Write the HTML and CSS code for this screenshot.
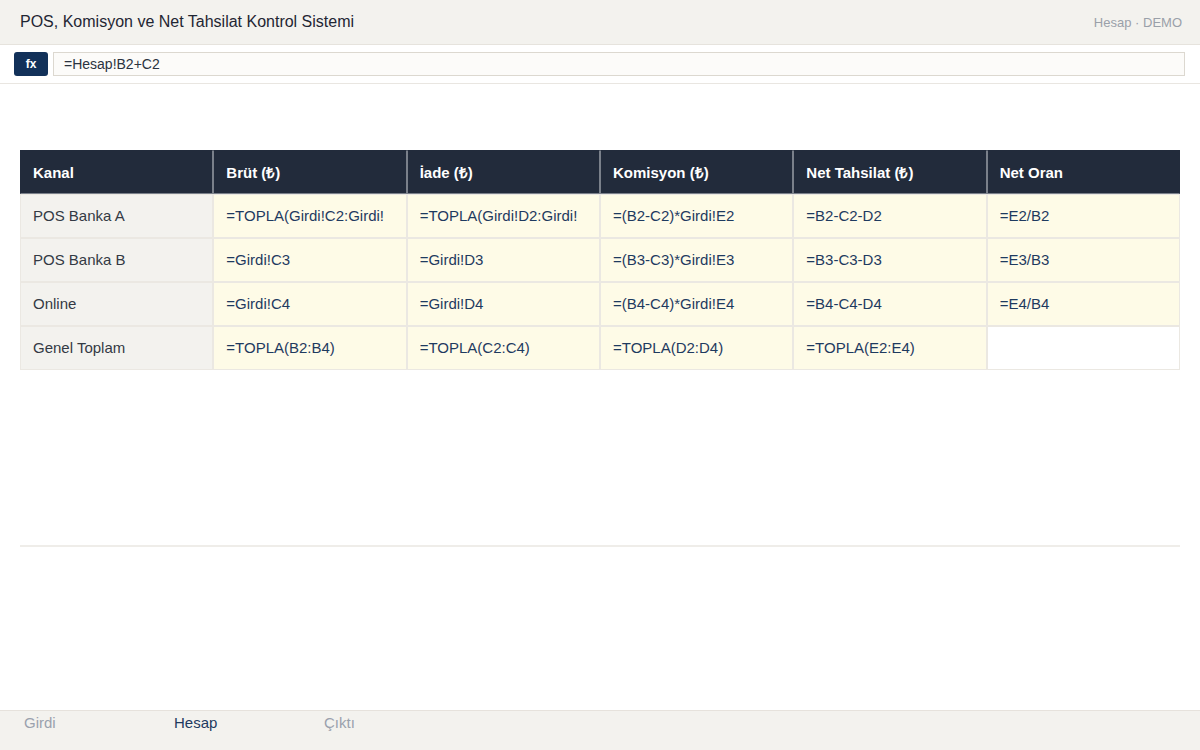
FILE: index.html
```html
<!DOCTYPE html>
<html lang="tr">
<head>
  <meta charset="UTF-8">
  <title>POS, Komisyon ve Net Tahsilat Kontrol Sistemi</title>
  <meta name="viewport" content="width=device-width, initial-scale=1">
  <link rel="stylesheet" href="styles.css">
</head>
<body>
  <div class="app">
    <header class="topbar">
      <div class="title">POS, Komisyon ve Net Tahsilat Kontrol Sistemi</div>
      <div class="meta">Hesap · DEMO</div>
    </header>

    <div class="formula-bar">
      <span class="fx">fx</span>
      <div class="formula-input">=Hesap!B2+C2</div>
    </div>

    <main class="sheet">
      <table class="grid">
        <thead>
          <tr>
            <th>Kanal</th>
            <th>Brüt (₺)</th>
            <th>İade (₺)</th>
            <th>Komisyon (₺)</th>
            <th>Net Tahsilat (₺)</th>
            <th>Net Oran</th>
          </tr>
        </thead>
        <tbody>
          <tr>
            <td class="label"><div class="cell">POS Banka A</div></td>
            <td class="formula"><div class="cell">=TOPLA(Girdi!C2:Girdi!<wbr>C2)</div></td>
            <td class="formula"><div class="cell">=TOPLA(Girdi!D2:Girdi!<wbr>D2)</div></td>
            <td class="formula"><div class="cell">=(B2-C2)*Girdi!E2</div></td>
            <td class="formula"><div class="cell">=B2-C2-D2</div></td>
            <td class="formula"><div class="cell">=E2/B2</div></td>
          </tr>
          <tr>
            <td class="label"><div class="cell">POS Banka B</div></td>
            <td class="formula"><div class="cell">=Girdi!C3</div></td>
            <td class="formula"><div class="cell">=Girdi!D3</div></td>
            <td class="formula"><div class="cell">=(B3-C3)*Girdi!E3</div></td>
            <td class="formula"><div class="cell">=B3-C3-D3</div></td>
            <td class="formula"><div class="cell">=E3/B3</div></td>
          </tr>
          <tr>
            <td class="label"><div class="cell">Online</div></td>
            <td class="formula"><div class="cell">=Girdi!C4</div></td>
            <td class="formula"><div class="cell">=Girdi!D4</div></td>
            <td class="formula"><div class="cell">=(B4-C4)*Girdi!E4</div></td>
            <td class="formula"><div class="cell">=B4-C4-D4</div></td>
            <td class="formula"><div class="cell">=E4/B4</div></td>
          </tr>
          <tr>
            <td class="label"><div class="cell">Genel Toplam</div></td>
            <td class="formula"><div class="cell">=TOPLA(B2:B4)</div></td>
            <td class="formula"><div class="cell">=TOPLA(C2:C4)</div></td>
            <td class="formula"><div class="cell">=TOPLA(D2:D4)</div></td>
            <td class="formula"><div class="cell">=TOPLA(E2:E4)</div></td>
            <td class="empty"></td>
          </tr>
        </tbody>
      </table>

      <div class="divider"></div>
    </main>

    <nav class="tabs">
      <span class="tab">Girdi</span>
      <span class="tab active">Hesap</span>
      <span class="tab">Çıktı</span>
    </nav>
  </div>
</body>
</html>
```

FILE: styles.css
```css
html, body {
  margin: 0;
  padding: 0;
  height: 100%;
}

body {
  font-family: "Liberation Sans", Arial, sans-serif;
  background: #ffffff;
  color: #1f2633;
}

.app {
  height: 100vh;
  display: flex;
  flex-direction: column;
}

/*===============================
Top bar + formula bar
=============*/

.topbar {
  height: 44px;
  display: flex;
  align-items: center;
  justify-content: space-between;
  padding: 0 18px 0 20px;
  background: #f3f2ee;
  border-bottom: 1px solid #e6e3dd;
}

.title {
  font-size: 16px;
  color: #1f2633;
}

.meta {
  font-size: 13px;
  color: #9aa0a9;
}

.formula-bar {
  display: flex;
  align-items: center;
  gap: 5px;
  padding: 7px 15px 7px 14px;
  border-bottom: 1px solid #e9e6e1;
}

.fx {
  width: 34px;
  height: 24px;
  display: flex;
  align-items: center;
  justify-content: center;
  border-radius: 3px;
  background: #123159;
  color: #ffffff;
  font-size: 12px;
  font-weight: bold;
}

.formula-input {
  flex: 1;
  height: 22px;
  line-height: 22px;
  padding: 0 10px;
  background: #fcfbf9;
  border: 1px solid #dcd8d0;
  font-size: 14px;
  color: #2b3340;
}

/*===============================
Sheet
=============*/

.sheet {
  flex: 1;
  padding: 66px 20px 0;
}

.grid {
  width: 100%;
  table-layout: fixed;
  border-collapse: separate;
  border-spacing: 0;
  font-size: 15px;
}

.grid th,
.grid td {
  height: 42px;
  padding: 0 12px;
  text-align: left;
  overflow: hidden;
  border: 1px solid #ebe8e2;
}

.cell {
  height: 18px;
  line-height: 18px;
  overflow: hidden;
}

.grid th {
  background: #222b3b;
  color: #ffffff;
  font-size: 15px;
  font-weight: bold;
  white-space: nowrap;
  border-color: #222b3b #7a808a #7a808a #7a808a;
}

.grid th:first-child {
  border-left-color: #222b3b;
}

.grid th:last-child {
  border-right-color: #222b3b;
}

.label {
  background: #f3f2ee;
  color: #333a44;
}

.formula {
  background: #fefbe7;
  color: #1e3a5f;
}

.empty {
  background: #ffffff;
}

.divider {
  margin-top: 175px;
  height: 2px;
  background: #efede9;
}

/*===============================
Bottom tabs
=============*/

.tabs {
  height: 39px;
  display: flex;
  background: #f3f2ee;
  border-top: 1px solid #e6e2dc;
}

.tab {
  width: 126px;
  padding: 3px 0 0 24px;
  font-size: 15px;
  color: #9aa1ad;
}

.tab.active {
  color: #1e3a5f;
}
```
